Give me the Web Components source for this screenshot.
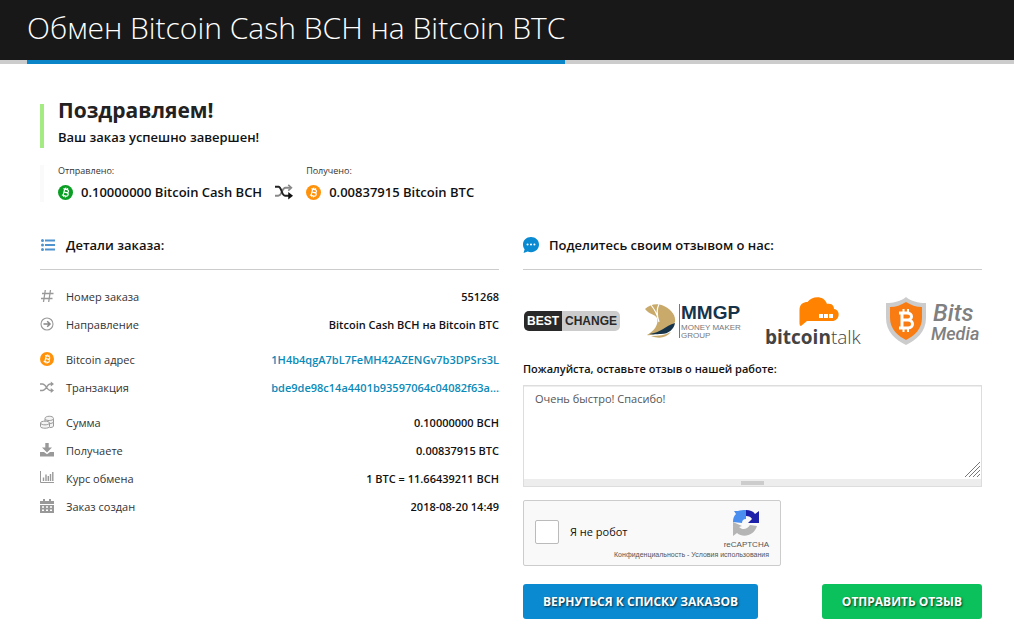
<!DOCTYPE html>
<html lang="ru">
<head>
<meta charset="utf-8">
<meta name="viewport" content="width=device-width, initial-scale=1">
<title>Обмен Bitcoin Cash BCH на Bitcoin BTC</title>
<style>
    body { margin: 0; background: #fff; color: #111; font-family: "Open Sans", "Noto Sans", sans-serif; }
</style>
</head>
<body>
<order-page></order-page>

<script>
(function() {
    const ICONS = {
        list: `<g fill="#4f93cf"><circle cx="1.5" cy="2.5" r="1.5"/><circle cx="1.5" cy="7" r="1.5"/><circle cx="1.5" cy="11.5" r="1.5"/><path d="M4 1.5h10v2H4zM4 6h10v2H4zM4 10.5h10v2H4z"/></g>`,
        comment: `<path fill="#0a8ad0" d="M7 0C3 0 0 2.9 0 6.6c0 1.9.6 3.2 1.4 4.2L.5 14l3.6-1.3c.9.4 1.9.6 3 .6 3.9 0 6.9-3 6.9-6.7S11 0 7 0z"/><g fill="#fff"><circle cx="4" cy="6.5" r=".9"/><circle cx="7" cy="6.5" r=".9"/><circle cx="10" cy="6.5" r=".9"/></g>`,
        hash: `<path fill="none" stroke="#999" stroke-width="1.3" d="M5.3 1 3.5 13M10.5 1 8.7 13M2 4.5h11.5M1 9.5h11.5"/>`,
        arrow: `<circle cx="7" cy="7" r="6" fill="none" stroke="#999" stroke-width="1.1"/><path fill="none" stroke="#888" stroke-width="1.5" d="M3.5 7h6M7.2 4.3 10 7 7.2 9.7"/>`,
        shuffle: `<path fill="none" stroke="#999" stroke-width="1.3" d="M0 4h2.5C6 4 7 10.5 10 10.5h2M0 10.5h2.5C6 10.5 7 4 10 4h2"/><path fill="#999" d="M10.8 1.5 14 4l-3.2 2.5zM10.8 8 14 10.5 10.8 13z"/>`,
        exchange: `<path fill="none" stroke="#888" stroke-width="1.8" d="M0 11h3C7 11 6 3.5 10 3.5h5"/><path fill="none" stroke="#888" stroke-width="1.5" d="M12.5.8 15.5 3.5 12.5 6.2"/><path fill="none" stroke="#222" stroke-width="1.8" d="M0 2.5h3.5C6.5 3 6 11 9.5 11H15"/><path fill="#111" d="M12.5 7.5 17 11l-4.5 3.5z"/>`,
        coins: `<g fill="#f4f4f4" stroke="#999"><path d="M5 7V3.5C5 .5 13.5.5 13.5 3.5V11c0 1-2 1.6-4 1.6"/><path d="M5 4c1 2 7.5 2 8.5 0M13.5 7c-.5 1-2 1.5-4 1.5"/><path d="M.5 8v3.5c0 2.3 9 2.3 9 0V8c0-2.5-9-2.5-9 0z"/><path d="M.5 8.2c1 2.2 8 2.2 9 0"/></g>`,
        download: `<path fill="#999" d="M5.3 0h3.4v4.5H12L7 9.5 2 4.5h3.3zM0 9h4l3 2.3L10 9h4v4.5H0z"/>`,
        chart: `<path fill="none" stroke="#999" d="M.5 0v11.5H14"/><path stroke="#999" stroke-width="1.4" d="M3.5 10V6.5M6 10V3.5M8.3 10V5M10.5 10V3M12.8 10V1"/>`,
        calendar: `<path fill="#999" fill-rule="evenodd" d="M0 2h3V0h2v2h4V0h2v2h3v3H0zM0 6h14v8H0zM2 7.2v1.6h2V7.2zM6 7.2v1.6h2V7.2zM10 7.2v1.6h2V7.2zM2 10.4V12h2v-1.6zM6 10.4V12h2v-1.6zM10 10.4V12h2v-1.6z"/>`,
        btc: `<circle cx="7" cy="7" r="7" fill="#ff920a"/><g fill="none" stroke="#fff" stroke-width="1.1" transform="rotate(14 7 7)"><path d="M4.3 4h3.5c2.2 0 2.2 2.9 0 2.9H5.3h2.8c2.4 0 2.4 3.2 0 3.2H4.3M5.5 4v6M6.3 2.5V4M8 2.5V4M6.3 10v1.5M8 10v1.5"/></g>`
    };
    ICONS.bch = ICONS.btc.replace('#ff920a', '#0a9f24');

    class UiIcon extends HTMLElement {
        connectedCallback() {
            const name = this.getAttribute('name');
            const box = name === 'exchange' ? '0 0 17 15' : '0 0 14 14';
            this.attachShadow({ mode: 'open' }).innerHTML = `
                <style>
                    :host { display: block; flex: none; width: var(--icon-size, 14px); height: var(--icon-height, 14px); }
                    svg { display: block; width: 100%; height: 100%; }
                </style>
                <svg viewBox="${box}" aria-hidden="true">${ICONS[name] || ''}</svg>
            `;
        }
    }

    class PageTitle extends HTMLElement {
        connectedCallback() {
            this.attachShadow({ mode: 'open' }).innerHTML = `
                <style>
                    :host { display: flex; background: #181818; padding: 0 27px; box-shadow: inset 0 -4px #ccc; }
                    h1 { margin: 0; padding-bottom: 4px; border-bottom: 4px solid #0a86c8; color: #fff; font-size: 30px; line-height: 56px; font-weight: 300; }
                </style>
                <h1><slot></slot></h1>
            `;
        }
    }

    class OrderNotice extends HTMLElement {
        connectedCallback() {
            this.attachShadow({ mode: 'open' }).innerHTML = `
                <style>
                    :host { display: block; border-left: 4px solid #a5eb84; padding: 0 0 3px 14px; font-size: 13px; line-height: 16px; font-weight: 600; }
                    h2 { margin: 0 0 13px; font-size: 21px; line-height: 12px; font-weight: 700; color: #222; }
                </style>
                <h2>${this.getAttribute('heading')}</h2>
                <slot></slot>
            `;
        }
    }

    class CoinAmount extends HTMLElement {
        connectedCallback() {
            this.attachShadow({ mode: 'open' }).innerHTML = `
                <style>
                    :host { display: block; }
                    small { display: block; font-size: 9px; line-height: 12px; color: #333; }
                    div { display: flex; align-items: center; gap: 8px; padding-top: 5px; font-size: 13px; line-height: 20px; font-weight: 600; }
                    ui-icon { --icon-size: 15px; --icon-height: 15px; }
                </style>
                <small>${this.getAttribute('label')}</small>
                <div><ui-icon name="${this.getAttribute('coin')}"></ui-icon><slot></slot></div>
            `;
        }
    }

    class SectionCard extends HTMLElement {
        connectedCallback() {
            this.attachShadow({ mode: 'open' }).innerHTML = `
                <style>
                    :host { display: block; min-width: 0; }
                    h3 { display: flex; align-items: center; gap: 10px; margin: 0; padding-bottom: 14px; border-bottom: 1px solid #ccc; font-size: 13px; line-height: 20px; font-weight: 600; }
                    ui-icon { --icon-size: 16px; --icon-height: 16px; }
                    ui-icon[name="list"] { --icon-height: 14px; }
                </style>
                <h3><ui-icon name="${this.getAttribute('icon')}"></ui-icon>${this.getAttribute('heading')}</h3>
                <slot></slot>
            `;
        }
    }

    class OrderRow extends HTMLElement {
        connectedCallback() {
            this.attachShadow({ mode: 'open' }).innerHTML = `
                <style>
                    :host { display: flex; align-items: center; gap: 12px; height: 28px; font-size: 11px; color: #333; }
                    .label { flex: 1; white-space: nowrap; }
                    .value { overflow: hidden; text-overflow: ellipsis; white-space: nowrap; font-weight: 600; color: #111; }
                    ::slotted(a) { color: #0a8ab8; text-decoration: none; }
                </style>
                <ui-icon name="${this.getAttribute('icon')}"></ui-icon>
                <span class="label">${this.getAttribute('label')}</span>
                <span class="value"><slot></slot></span>
            `;
        }
    }

    class ReviewSites extends HTMLElement {
        connectedCallback() {
            this.attachShadow({ mode: 'open' }).innerHTML = `
                <style>
                    :host { display: flex; justify-content: space-between; padding: 25px 0 8px; }
                    svg { display: block; }
                    a { display: block; }
                </style>
                <a href="#bestchange" aria-label="BestChange">
                    <svg width="97" height="58" viewBox="0 0 97 58">
                        <rect x="1" y="16" width="96" height="20" rx="5" fill="#ccc"/>
                        <path fill="#292929" d="M6 16h33v20H6a5 5 0 0 1-5-5V21a5 5 0 0 1 5-5z"/>
                        <g font-family="Liberation Sans, sans-serif" font-size="12" font-weight="700">
                            <text x="4" y="30" fill="#fff">BEST</text>
                            <text x="42" y="30" fill="#292929">CHANGE</text>
                        </g>
                    </svg>
                </a>
                <a href="#mmgp" aria-label="MMGP">
                    <svg width="98" height="58" viewBox="0 0 98 58">
                        <path fill="#c9aa6b" d="M2 14c5-5 13-6 19-3 8 4 12 10 11 16-2 3-8 7-14 9-5 2-9 5-14 4 8-4 12-12 10-17-2-4-7-3-12-9z"/>
                        <path fill="#17334a" d="M32 28c-1 6-6 11-14 11-3 0-8 1-12 0 12-1 16-8 26-11z"/>
                        <path fill="#c9aa6b" d="M28 37c-5 6-12 7-20 4 8 0 14-1 20-4z"/>
                        <path fill="none" stroke="#fff" stroke-width="1.2" d="M8 10c4 5 6 8 7 14M16 9c-3 6-2 12 0 18"/>
                        <path stroke="#6b7c8c" d="M36.5 9v34"/>
                        <g font-family="Liberation Sans, sans-serif">
                            <text x="38" y="24" fill="#17334a" font-size="19" font-weight="700">MMGP</text>
                            <text x="38" y="35" fill="#777" font-size="8">MONEY MAKER</text>
                            <text x="38" y="43" fill="#777" font-size="8">GROUP</text>
                        </g>
                    </svg>
                </a>
                <a href="#bitcointalk" aria-label="bitcointalk">
                    <svg width="98" height="58" viewBox="0 0 98 58">
                        <path fill="#ff8200" d="M37 31c-1 0-1.5-1-1.5-3V15c0-6 4-8 8-8C48 1 60 0 63 9c6-1 7 3 7 5 7 1 6 12-2 12H43z"/>
                        <path fill="#fff" d="M55 19h4v4h-4zM60 19h4v4h-4zM65 19h4v4h-4z"/>
                        <text x="1" y="49" font-family="Open Sans, sans-serif" font-size="19" fill="#444"><tspan font-weight="700">bitcoin</tspan><tspan font-weight="300">talk</tspan></text>
                    </svg>
                </a>
                <a href="#bitsmedia" aria-label="Bits Media">
                    <svg width="97" height="58" viewBox="0 0 97 58">
                        <path fill="#ccc" d="M21 2c5 4 12 6 20 6v15c0 14-10 22-20 27C11 45 1 37 1 23V8c8 0 15-2 20-6z"/>
                        <path fill="#f97c13" d="M21 7c5 3 10 5 16 5v11c0 11-8 18-16 22C13 41 5 34 5 23V12c6 0 11-2 16-5z"/>
                        <path fill="none" stroke="#fff" stroke-width="3" d="M14 18h8c6 0 6 7 0 7h-5 6c6 0 6 8 0 8h-9M17 18v15"/>
                        <path stroke="#fff" stroke-width="2" d="M18.5 14v4M23 14v4M18.5 33v4M23 33v4"/>
                        <g font-family="Roboto, sans-serif" font-style="italic" font-weight="500" fill="#808080">
                            <text x="48" y="26" font-size="24">Bits</text>
                            <text x="46" y="45" font-size="18">Media</text>
                        </g>
                    </svg>
                </a>
            `;
        }
    }

    class CaptchaBox extends HTMLElement {
        connectedCallback() {
            this.attachShadow({ mode: 'open' }).innerHTML = `
                <style>
                    :host { display: flex; justify-content: space-between; box-sizing: border-box; width: 258px; height: 66px; padding: 0 11px; background: #f9f9f9; border: 1px solid #ccc; border-radius: 2px; }
                    label { display: flex; align-items: center; gap: 11px; padding-bottom: 3px; font-size: 11px; white-space: nowrap; }
                    input { appearance: none; width: 24px; height: 24px; margin: 0; background: #fff; border: 1px solid #bbb; border-radius: 2px; }
                    input:checked { background: #0a8ad0; }
                    .brand { display: flex; flex-direction: column; align-items: flex-end; width: 64px; padding-top: 8px; font-family: "Liberation Sans", sans-serif; font-size: 8px; line-height: 12px; color: #555; }
                    .brand svg { margin-right: 9px; margin-bottom: 2px; }
                    .links { font-size: 7px; line-height: 8px; white-space: nowrap; }
                    a { color: inherit; text-decoration: none; }
                </style>
                <label for="robot"><input type="checkbox" id="robot">Я не робот</label>
                <div class="brand">
                    <svg width="28" height="28" viewBox="0 0 28 28" aria-hidden="true">
                        <path fill="#4a8ff0" d="M14 1v9c-3 0-4 2-4 4L1 13c0-4 1-6 3-8L2 2h4c2-1 5-1 8-1z"/>
                        <path fill="#1c1fa9" d="M14 1c4 0 7 1 9 4l4-3v12H16l4-4c-1-2-3-3-6-3z"/>
                        <path fill="#b5b5b5" d="M1 13l9 4-3 1c3 3 8 3 11-2l7 1c-3 10-14 12-20 7l-4 3z"/>
                    </svg>
                    <span>reCAPTCHA</span>
                    <div class="links"><a href="#privacy">Конфиденциальность</a> - <a href="#terms">Условия использования</a></div>
                </div>
            `;
        }
    }

    class ReviewForm extends HTMLElement {
        connectedCallback() {
            this.attachShadow({ mode: 'open' }).innerHTML = `
                <style>
                    :host { display: block; }
                    .caption { display: block; padding-bottom: 8px; font-size: 11px; line-height: 16px; font-weight: 600; }
                    .field { position: relative; margin-bottom: 13px; border: 1px solid #ddd; }
                    textarea { display: block; box-sizing: border-box; width: 100%; height: 93px; padding: 4px 11px; border: 0; border-top: 1px solid #eee; resize: none; outline: none; font: 11px/16px "Open Sans", "Noto Sans", sans-serif; color: #555; }
                    .corner { position: absolute; right: 1px; bottom: 9px; }
                    .grip { display: flex; justify-content: center; align-items: center; height: 7px; background: #ededed; }
                    .grip::before { content: ""; width: 23px; height: 4px; background: #ccc; }
                    .actions { display: flex; justify-content: space-between; padding-top: 18px; }
                    button { height: 35px; padding: 0 20px; border: 0; border-radius: 3px; color: #fff; font: 700 12px/20px "Open Sans", "Noto Sans", sans-serif; text-transform: uppercase; text-shadow: 1px 1px 2px rgba(0,0,0,.7); cursor: pointer; }
                    .back { background: #0a8ad0; }
                    .send { background: #0bc15c; }
                </style>
                <label class="caption" for="review">Пожалуйста, оставьте отзыв о нашей работе:</label>
                <div class="field">
                    <textarea id="review">Очень быстро! Спасибо!</textarea>
                    <svg class="corner" width="15" height="15" viewBox="0 0 15 15" aria-hidden="true"><path fill="none" stroke="#777" d="M0 15 15 0M4 15 15 4M8 15 15 8M12 15l3-3"/></svg>
                    <div class="grip"></div>
                </div>
                <captcha-box></captcha-box>
                <div class="actions">
                    <button type="button" class="back">Вернуться к списку заказов</button>
                    <button type="button" class="send">Отправить отзыв</button>
                </div>
            `;
        }
    }

    class OrderPage extends HTMLElement {
        connectedCallback() {
            this.attachShadow({ mode: 'open' }).innerHTML = `
                <style>
                    :host { display: block; }
                    main { padding: 40px 32px 16px 40px; }
                    .summary { display: flex; align-items: flex-end; gap: 13px; margin: 17px 0 33px; padding-left: 14px; border-left: 4px solid #fafafa; }
                    .summary ui-icon { --icon-size: 18px; --icon-height: 20px; }
                    .columns { display: grid; grid-template-columns: minmax(0, 1fr) minmax(0, 1fr); gap: 24px; }
                    .rows { display: flex; flex-direction: column; gap: 7px; padding-top: 12px; }
                </style>
                <page-title>Обмен Bitcoin Cash BCH на Bitcoin BTC</page-title>
                <main>
                    <order-notice heading="Поздравляем!">Ваш заказ успешно завершен!</order-notice>
                    <div class="summary">
                        <coin-amount label="Отправлено:" coin="bch">0.10000000 Bitcoin Cash BCH</coin-amount>
                        <ui-icon name="exchange"></ui-icon>
                        <coin-amount label="Получено:" coin="btc">0.00837915 Bitcoin BTC</coin-amount>
                    </div>
                    <div class="columns">
                        <section-card icon="list" heading="Детали заказа:">
                            <div class="rows">
                                <div>
                                    <order-row icon="hash" label="Номер заказа">551268</order-row>
                                    <order-row icon="arrow" label="Направление">Bitcoin Cash BCH на Bitcoin BTC</order-row>
                                </div>
                                <div>
                                    <order-row icon="btc" label="Bitcoin адрес"><a href="#address">1H4b4qgA7bL7FeMH42AZENGv7b3DPSrs3L</a></order-row>
                                    <order-row icon="shuffle" label="Транзакция"><a href="#tx">bde9de98c14a4401b93597064c04082f63a...</a></order-row>
                                </div>
                                <div>
                                    <order-row icon="coins" label="Сумма">0.10000000 BCH</order-row>
                                    <order-row icon="download" label="Получаете">0.00837915 BTC</order-row>
                                    <order-row icon="chart" label="Курс обмена">1 BTC = 11.66439211 BCH</order-row>
                                    <order-row icon="calendar" label="Заказ создан">2018-08-20 14:49</order-row>
                                </div>
                            </div>
                        </section-card>
                        <section-card icon="comment" heading="Поделитесь своим отзывом о нас:">
                            <review-sites></review-sites>
                            <review-form></review-form>
                        </section-card>
                    </div>
                </main>
            `;
        }
    }

    customElements.define('ui-icon', UiIcon);
    customElements.define('page-title', PageTitle);
    customElements.define('order-notice', OrderNotice);
    customElements.define('coin-amount', CoinAmount);
    customElements.define('section-card', SectionCard);
    customElements.define('order-row', OrderRow);
    customElements.define('review-sites', ReviewSites);
    customElements.define('captcha-box', CaptchaBox);
    customElements.define('review-form', ReviewForm);
    customElements.define('order-page', OrderPage);
})();
</script>
</body>
</html>
